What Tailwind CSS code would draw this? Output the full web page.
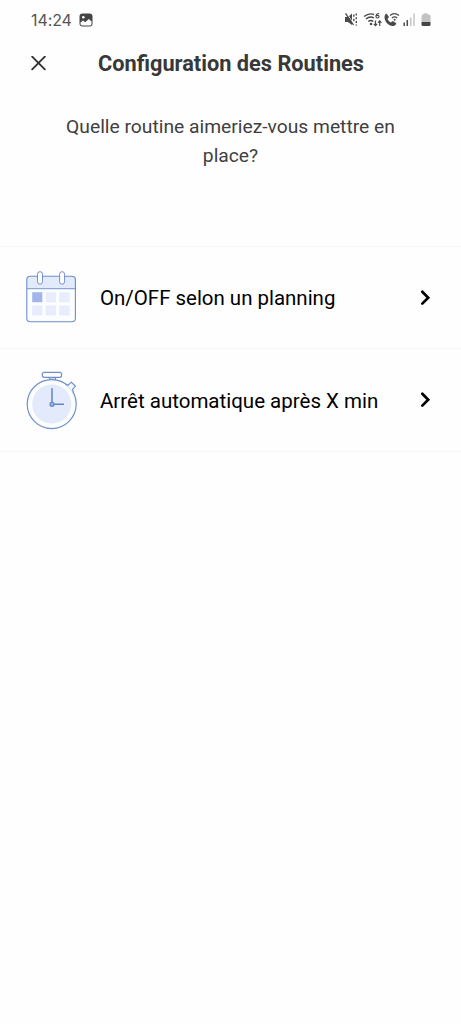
<!DOCTYPE html>
<html lang="fr">
<head>
<meta charset="utf-8">
<title>Configuration des Routines</title>
<script src="https://cdn.jsdelivr.net/npm/@tailwindcss/browser@4"></script>
</head>
<body class="min-h-screen bg-[#fefefe] font-[Roboto,sans-serif] text-black">
<div class="flex h-10 items-center justify-between pl-[31px] pr-[29px] text-[#555]">
  <div class="flex items-center gap-[7px]">
    <span class="pb-px font-[Inter,sans-serif] text-[16px] leading-5 tracking-[-0.1px]">14:24</span>
    <svg width="14" height="14" viewBox="0 0 14 14"><rect x=".5" y=".5" width="13" height="13" rx="3" fill="#454545"/><circle cx="4.300" cy="4.300" r="1.300" fill="#fff"/><path d="M1.500 9.500 4 7.600l2.200 1.700L9.800 6l2.700 2.600v2.200a1.600 1.600 0 0 1-1.600 1.600H3.100a1.600 1.600 0 0 1-1.600-1.600z" fill="#fff"/></svg>
  </div>
  <svg width="88" height="18" viewBox="344 11 88 18" fill="none" stroke="#4a4a4a">
    <path d="M345 17h3l4-3.500v11.500L348 22h-3z" fill="#4a4a4a" stroke="none"/>
    <path d="m346.500 13 7.500 11.500" stroke="#fefefe" stroke-width="1"/>
    <path d="m345.500 13.300 8 11.700" stroke-width="1.300"/>
    <path d="M353.800 14.500v2.300m0 2v2.300M356.300 13.500v2m0 1.800v2m0 1.800v2m0 1.500v1" stroke-width="1.400"/>
    <path d="M364 16.500q5-4 10-2M366 19q4-3.300 8-1M368.300 21.500q2.500-2 5 0" stroke-width="1.400"/>
    <circle cx="371" cy="24" r="1.300" fill="#4a4a4a" stroke="none"/>
    <path d="M379 13.500q-3 0-3 3a1.500 1.500 0 1 0 3 0q0-1.500-2.500-1" stroke-width="1.200"/>
    <path d="M375.500 20.500v5m-1.700-1.700 1.700 1.900 1.700-1.900M379.700 26v-5m-1.700 1.700 1.700-1.900 1.700 1.900" stroke-width="1.200"/>
    <path d="M386.500 13.500 389 17l-1.500 2q1 2.300 3.300 3.500l2-1.500 3.500 2.200q-.7 2.800-3.700 2.800c-4.500-.3-8.100-4.500-8.100-9q0-3 2-3.500z" fill="#4a4a4a" stroke="none"/>
    <path d="M390 15.500q4.300-3.600 9 0M392 18q2.600-2.300 5.200 0" stroke-width="1.300"/>
    <circle cx="394.600" cy="19.700" r="1" fill="#4a4a4a" stroke="none"/>
    <path d="M404.200 22.500V26M407.300 20v6" stroke-width="1.500"/>
    <path d="M410.700 17.500V26M414 13.500V26" stroke="#c6c6c6" stroke-width="1.500"/>
    <path d="M423.500 13.300h4v1.200h1.500q1.500 0 1.500 1.500v6h-9v-6q0-1.500 1.500-1.500h.5z" fill="#c2c2c2" stroke="none"/>
    <path d="M421.500 22h9v2.500q0 1.500-1.500 1.500h-6q-1.500 0-1.500-1.500z" fill="#444" stroke="none"/>
  </svg>
</div>
<header class="flex h-[47px] items-center pl-[31px]">
  <svg class="shrink-0" width="15" height="15" viewBox="0 0 15 15" fill="none" stroke="#333" stroke-width="1.900" stroke-linecap="round"><path d="m1.200 .7 12.600 12.600m0-12.600L1.200 13.300"/></svg>
  <h1 class="ml-[52px] whitespace-nowrap text-[21.75px] font-bold leading-7 text-[#383838]">Configuration des Routines</h1>
</header>
<p class="mt-[25px] text-center text-[19.25px] leading-[29px] text-[#404040]">Quelle routine aimeriez-vous mettre en<br>place?</p>
<main class="mt-[76px] border-t border-[#f7f7f7]">
  <div class="flex h-[102px] items-center border-b border-[#f6f6f6] pl-5 pr-[29px]">
    <svg class="shrink-0" width="64" height="64" viewBox="20 265.800 64 64" fill="none">
      <rect x="26.800" y="276" width="48.600" height="45.500" rx="3.500" fill="#fcfdff"/>
      <path d="M27 288.500v-9q0-3.500 3.500-3.500h41.400q3.500 0 3.500 3.500v9z" fill="#e2ebfc"/>
      <path d="M27 288.500h48.400" stroke="#7895cb"/>
      <rect x="26.800" y="276" width="48.600" height="45.500" rx="3.500" stroke="#6d8dc9" stroke-width="1.100"/>
      <rect x="37.500" y="271.500" width="5" height="12.500" rx="2.500" fill="#fff" stroke="#718fc8"/>
      <rect x="59.600" y="271.500" width="5" height="12.500" rx="2.500" fill="#fff" stroke="#718fc8"/>
      <rect x="32.200" y="292" width="10.200" height="10" fill="#a2b6ed"/>
      <path d="M45.700 292h10.300v10H45.700zM59.200 292h10.500v10H59.200zM32.200 305.300h10.200v10H32.200zM45.700 305.300h10.300v10H45.700zM59.200 305.300h10.500v10H59.200z" fill="#e7edfc"/>
    </svg>
    <span class="ml-4 flex-1 whitespace-nowrap text-[20.45px] leading-7">On/OFF selon un planning</span>
    <svg class="shrink-0" width="14" height="18" viewBox="0 0 14 18" fill="none" stroke="#000" stroke-width="2.700" stroke-linecap="round"><path d="m4.300 2.800 5.900 5.900-5.900 5.900"/></svg>
  </div>
  <div class="flex h-[103px] items-center border-b border-[#f6f6f6] pl-5 pr-[29px]">
    <svg class="shrink-0" width="64" height="64" viewBox="20 368 64 64" fill="none" stroke="#7190ca" stroke-width="1.200">
      <path d="M49.500 377v4h6v-4" fill="#c6d6f5"/>
      <rect x="42.300" y="372.300" width="19.300" height="5" rx="2" fill="#fff"/>
      <circle cx="51.700" cy="404.100" r="24.500" fill="#fcfdff"/>
      <path d="m66.300 384.600 2 .6 3-3 4 4-2.800 3 .7 3.500z" fill="#f3f7fe" stroke="none"/>
      <path d="m65.900 384.300 2.300.9 3.100-3.100 4.200 4.100-3 3.100 1 3.300" stroke-linejoin="round"/>
      <circle cx="51.700" cy="404.100" r="19.500" fill="#e2eafb" stroke="none"/>
      <path d="M52 388.300V402m2 2.300h10" stroke="#6484c4" stroke-width="1.500"/>
      <circle cx="52" cy="404.300" r="2" fill="#a6baea" stroke="#6484c4"/>
    </svg>
    <span class="ml-4 flex-1 whitespace-nowrap pt-0.5 text-[20.5px] leading-7">Arrêt automatique après X min</span>
    <svg class="shrink-0" width="14" height="18" viewBox="0 0 14 18" fill="none" stroke="#000" stroke-width="2.700" stroke-linecap="round"><path d="m4.300 2.800 5.900 5.900-5.900 5.900"/></svg>
  </div>
</main>
</body>
</html>
